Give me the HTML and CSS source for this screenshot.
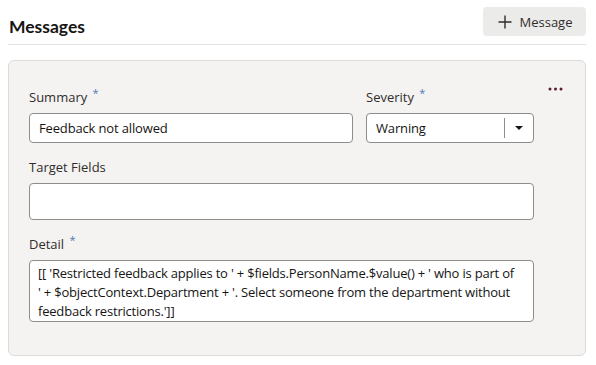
FILE: index.html
```html
<!DOCTYPE html>
<html lang="en">
<head>
    <meta charset="UTF-8">
    <meta name="viewport" content="width=device-width, initial-scale=1.0" />
    <title>Messages</title>
    <link rel="stylesheet" href="styles.css">
</head>
<body>
  <div class="page">
    <div class="header">
      <h2>Messages</h2>
      <button class="add-btn" type="button">
        <svg width="16" height="16" viewBox="0 0 16 16"><path d="M8 1.5v13M1.5 8h13" stroke="#312d2a" stroke-width="1.4" fill="none"/></svg>
        Message
      </button>
    </div>

    <div class="panel">
      <svg class="more" width="15" height="4" viewBox="0 0 15 4">
        <circle cx="2" cy="2" r="1.5" fill="#5e1c2a"/>
        <circle cx="7.5" cy="2" r="1.5" fill="#5e1c2a"/>
        <circle cx="13" cy="2" r="1.5" fill="#5e1c2a"/>
      </svg>

      <div class="row">
        <div class="field summary">
          <label>Summary <span class="req">*</span></label>
          <div class="input">Feedback not allowed</div>
        </div>
        <div class="field severity">
          <label>Severity <span class="req">*</span></label>
          <div class="input select">
            <span class="value">Warning</span>
            <span class="arrow"></span>
          </div>
        </div>
      </div>

      <div class="field">
        <label>Target Fields</label>
        <div class="input tall"></div>
      </div>

      <div class="field">
        <label>Detail <span class="req">*</span></label>
        <div class="input area">[[ 'Restricted feedback applies to ' + $fields.PersonName.$value() + ' who is part of '&nbsp;+ $objectContext.Department + '. Select someone from the department without feedback restrictions.']]</div>
      </div>
    </div>
  </div>
</body>
</html>
```

FILE: styles.css
```css
body {
  font-family: "Open Sans", "Noto Sans", Arial, sans-serif;
  background-color: #fff;
  color: #312d2a;
  margin: 0;
  padding: 0;
}
.page {
  width: 578px;
  margin-left: 8px;
}
.header {
  display: flex;
  justify-content: space-between;
  align-items: flex-start;
  height: 44px;
  border-bottom: 1px solid #e3e3e3;
}
.header h2 {
  margin: 16px 0 0 1px;
  font-family: Lato, "Open Sans", sans-serif;
  font-size: 17.5px;
  font-weight: 700;
  color: #161513;
}
.add-btn {
  margin-top: 7px;
  height: 29px;
  width: 103px;
  display: flex;
  align-items: center;
  justify-content: center;
  gap: 7px;
  padding: 0;
  border: none;
  border-radius: 4px;
  background-color: #ebebea;
  font-family: "Open Sans", sans-serif;
  font-size: 13px;
  color: #312d2a;
}
.panel {
  position: relative;
  margin-top: 15px;
  padding: 27px 51px 33px 20px;
  border: 1px solid #dcdbd9;
  border-radius: 6px;
  background-color: #f4f3f2;
}
.more {
  position: absolute;
  top: 26px;
  right: 22px;
}
.row {
  display: flex;
  gap: 13px;
  margin-bottom: 15px;
}
.summary {
  flex: 1;
}
.severity {
  width: 168px;
}
.field label {
  display: block;
  font-size: 13px;
  line-height: 18px;
  height: 18px;
  margin-bottom: 7px;
  color: #312d2a;
}
.req {
  position: relative;
  top: -5px;
  margin-left: 2px;
  font-size: 11px;
  color: #4f7bb5;
}
.input {
  box-sizing: border-box;
  height: 30px;
  padding: 0 9px;
  border: 1px solid #8f8c89;
  border-radius: 4px;
  background-color: #fff;
  font-size: 13px;
  letter-spacing: -0.15px;
  line-height: 28px;
  color: #161513;
}
.select {
  display: flex;
  align-items: center;
  padding-right: 0;
}
.select .value {
  flex: 1;
}
.arrow {
  position: relative;
  width: 28px;
  height: 20px;
  border-left: 1px solid #8f8c89;
}
.arrow::after {
  content: "";
  position: absolute;
  left: 10px;
  top: 8px;
  border-left: 4px solid transparent;
  border-right: 4px solid transparent;
  border-top: 4px solid #161513;
}
.tall {
  height: 37px;
  margin-bottom: 15px;
}
.area {
  height: 62px;
  padding: 3px 6px 0 8px;
  line-height: 19px;
  letter-spacing: -0.2px;
}
```
